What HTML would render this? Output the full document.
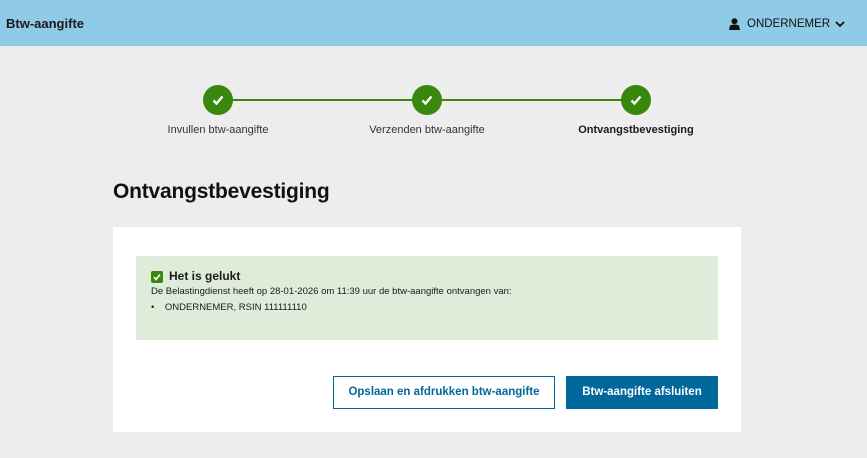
<!DOCTYPE html>
<html><head><style>
*{margin:0;padding:0;box-sizing:border-box}
body{width:867px;height:458px;background:#ededed;font-family:"Liberation Sans",sans-serif;position:relative;overflow:hidden;color:#1a1a1a}
.hdr{position:absolute;left:0;top:0;width:867px;height:46px;background:#8fcae7}
.abs{position:absolute}
.c{position:absolute;width:30px;height:30px;border-radius:50%;background:#39870c;top:85px}
.c svg{position:absolute;left:8px;top:8px}
.lbl{position:absolute;top:124px;font-size:11px;color:#333;white-space:nowrap;transform:translateX(-50%)}
</style></head><body>
<div class="hdr"></div>
<div class="abs" style="left:6px;top:16px;font-size:13px;font-weight:bold;color:#1a1a1a">Btw-aangifte</div>
<svg class="abs" style="left:729px;top:18px" width="11" height="12" viewBox="0 0 11 12"><circle cx="5.5" cy="3.2" r="3" fill="#111"/><path d="M0 12 L1 7.5 Q5.5 5.5 10 7.5 L11 12Z" fill="#111"/></svg>
<div class="abs" style="left:747px;top:18px;font-size:11.5px;color:#111">ONDERNEMER</div>
<svg class="abs" style="left:835px;top:21px" width="10" height="7" viewBox="0 0 10 7"><path d="M1 1 L5 5 L9 1" stroke="#111" stroke-width="1.8" fill="none"/></svg>
<div class="abs" style="left:218px;top:99px;width:418px;height:2px;background:#39870c"></div>
<div class="c" style="left:203px"><svg width="14" height="14" viewBox="0 0 14 14"><path d="M2.5 7.5 L5.5 10.5 L11.5 3.5" stroke="#fff" stroke-width="2.4" fill="none"/></svg></div>
<div class="c" style="left:412px"><svg width="14" height="14" viewBox="0 0 14 14"><path d="M2.5 7.5 L5.5 10.5 L11.5 3.5" stroke="#fff" stroke-width="2.4" fill="none"/></svg></div>
<div class="c" style="left:621px"><svg width="14" height="14" viewBox="0 0 14 14"><path d="M2.5 7.5 L5.5 10.5 L11.5 3.5" stroke="#fff" stroke-width="2.4" fill="none"/></svg></div>
<div class="lbl" style="left:218px">Invullen btw-aangifte</div>
<div class="lbl" style="left:427px">Verzenden btw-aangifte</div>
<div class="lbl" style="left:636px;font-weight:bold;color:#1a1a1a">Ontvangstbevestiging</div>
<div class="abs" style="left:113px;top:180px;font-size:21px;font-weight:bold;color:#111;letter-spacing:-0.2px">Ontvangstbevestiging</div>
<div class="abs" style="left:113px;top:227px;width:628px;height:205px;background:#fff"></div>
<div class="abs" style="left:136px;top:256px;width:582px;height:84px;background:#e0ecda"></div>
<div class="abs" style="left:151px;top:271px;width:12px;height:12px;background:#39870c;border-radius:2px"><svg width="12" height="12" viewBox="0 0 12 12" style="position:absolute;left:0;top:0"><path d="M3 6 L5 8.5 L9 3.5" stroke="#fff" stroke-width="1.6" fill="none"/></svg></div>
<div class="abs" style="left:169px;top:269px;font-size:12px;font-weight:bold">Het is gelukt</div>
<div class="abs" style="left:151px;top:286px;font-size:9.5px">De Belastingdienst heeft op 28-01-2026 om 11:39 uur de btw-aangifte ontvangen van:</div>
<div class="abs" style="left:151px;top:302px;font-size:9.5px">•&nbsp;&nbsp;&nbsp;&nbsp;ONDERNEMER, RSIN 111111110</div>
<div class="abs" style="left:333px;top:376px;width:222px;height:33px;border:1px solid #01689b;color:#01689b;font-size:11.5px;font-weight:bold;text-align:center;line-height:31px">Opslaan en afdrukken btw-aangifte</div>
<div class="abs" style="left:566px;top:376px;width:152px;height:33px;background:#01689b;color:#fff;font-size:11.5px;font-weight:bold;text-align:center;line-height:33px">Btw-aangifte afsluiten</div>
</body></html>
